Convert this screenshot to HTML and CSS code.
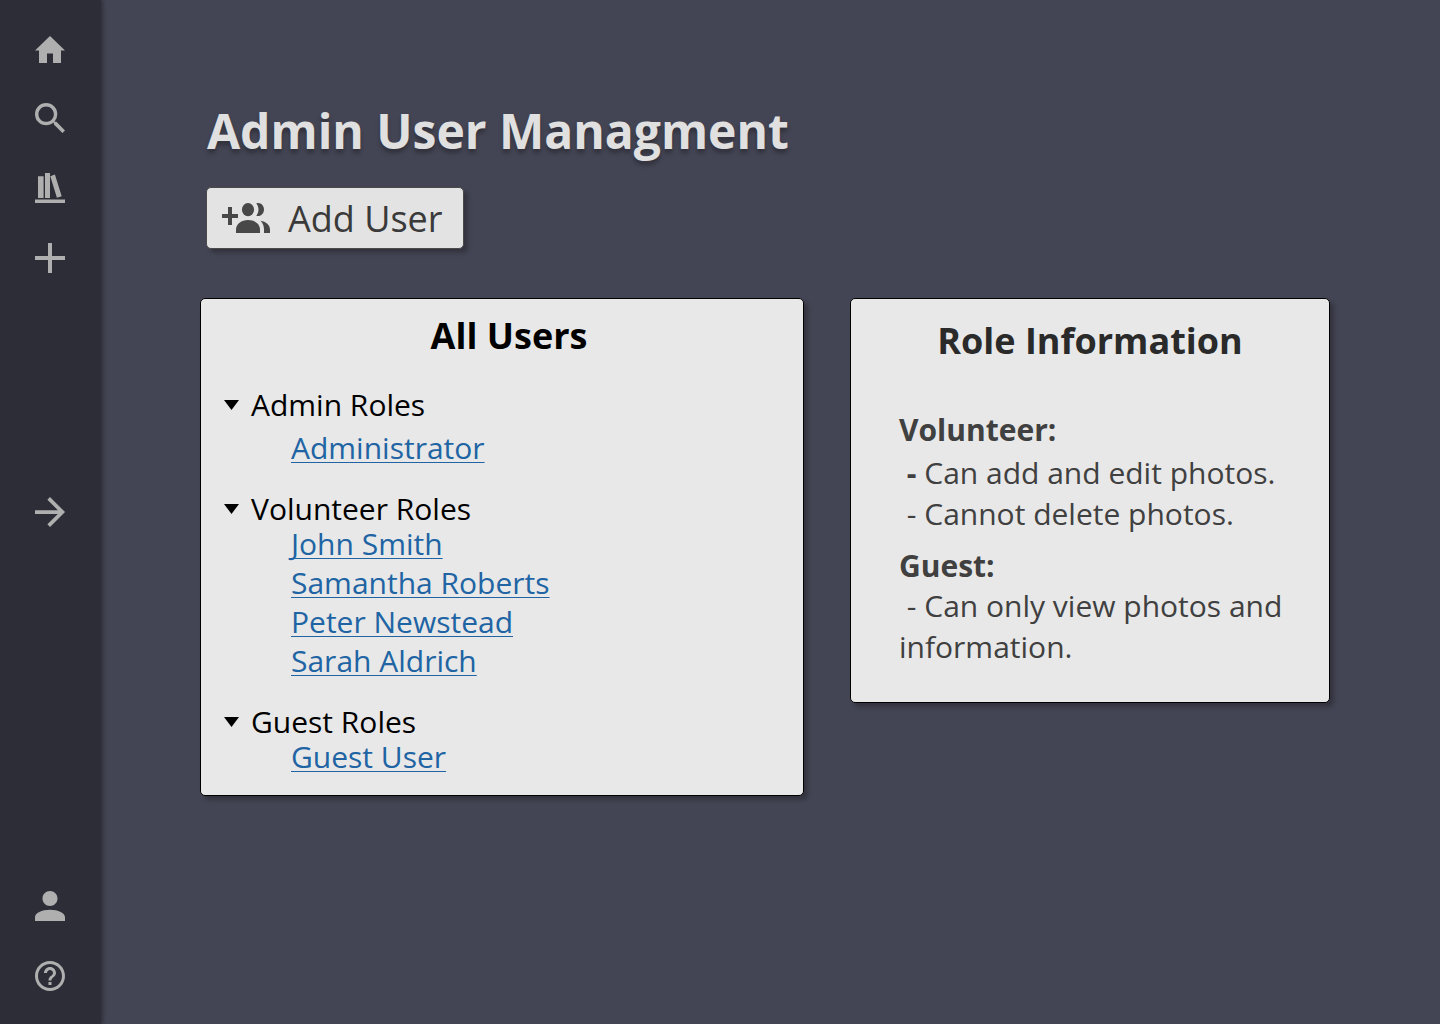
FILE: index.html
```html
<!DOCTYPE html>
<html lang="en">
<head>
<meta charset="utf-8">
<meta name="viewport" content="width=device-width, initial-scale=1">
<title>Admin User Managment</title>
<link rel="stylesheet" href="styles.css">
</head>
<body>
<div class="app">
  <nav class="sidebar" aria-label="Main">
    <div class="nav-group">
      <a class="nav-link" href="#home" aria-label="Home"><svg class="icon icon-home" viewBox="0 0 30 27"><path d="M15 0l15 14.4h-4V27h-8v-9.6h-6V27H4V14.4H0z"/></svg></a>
      <a class="nav-link" href="#search" aria-label="Search"><svg class="icon" viewBox="3 3 17.49 17.49"><path d="M15.5 14h-.79l-.28-.27A6.471 6.471 0 0 0 16 9.5 6.5 6.5 0 1 0 9.5 16c1.61 0 3.09-.59 4.23-1.57l.27.28v.79l5 4.99L20.49 19l-4.99-5zm-6 0C7.01 14 5 11.99 5 9.5S7.01 5 9.5 5 14 7.01 14 9.5 11.99 14 9.5 14z"/></svg></a>
      <a class="nav-link" href="#library" aria-label="Library"><svg class="icon" viewBox="0 0 30 30"><path d="M3 3.3h5.6V25H3zM10 0h5v25h-5zM15.3 3.2l4.6-1.6 6.8 21.6-4.8 1.6zM0 26.5h30V30H0z"/></svg></a>
      <a class="nav-link" href="#add" aria-label="Add"><svg class="icon" viewBox="0 0 30 30"><path d="M13 0h4v13h13v4H17v13h-4V17H0v-4h13z"/></svg></a>
    </div>
    <a class="nav-link" href="#expand" aria-label="Expand menu"><svg class="icon" viewBox="4 4 16 16"><path d="M12 4l-1.41 1.41L16.17 11H4v2h12.17l-5.58 5.59L12 20l8-8z"/></svg></a>
    <div class="nav-group nav-bottom">
      <a class="nav-link" href="#profile" aria-label="Profile"><svg class="icon" viewBox="4 4 16 16"><path d="M12 12c2.21 0 4-1.79 4-4s-1.79-4-4-4-4 1.79-4 4 1.79 4 4 4zm0 2c-4.42 0-8 1.79-8 4v2h16v-2c0-2.21-3.58-4-8-4z"/></svg></a>
      <a class="nav-link" href="#help" aria-label="Help"><svg class="icon" viewBox="2 2 20 20"><path d="M11 18h2v-2h-2v2zm1-16C6.48 2 2 6.48 2 12s4.48 10 10 10 10-4.48 10-10S17.52 2 12 2zm0 18c-4.41 0-8-3.59-8-8s3.59-8 8-8 8 3.59 8 8-3.59 8-8 8zm0-14c-2.21 0-4 1.79-4 4h2c0-1.1.9-2 2-2s2 .9 2 2c0 2-3 1.75-3 5h2c0-2.25 3-2.5 3-5 0-2.21-1.79-4-4-4z"/></svg></a>
    </div>
  </nav>

  <main class="content">
    <header class="page-header">
      <h1 class="page-title">Admin User Managment</h1>
      <button class="add-user" type="button">
        <svg class="icon-group-add" viewBox="0 0 48 30" aria-hidden="true"><path d="M6 4h4v7h6v4h-6v7H6v-7H0v-4h6z"/><ellipse cx="26" cy="6.6" rx="6.1" ry="6.6"/><path d="M34.3 0.3C38.7 -.8 42 2.5 42 6.6s-3.3 7.4-7.7 6.3C37.2 9.3 37.2 3.9 34.3.3z"/><path d="M14 30v-3.5C14 21 19.4 17 26 17s12 4 12 9.5V30z"/><path d="M38.5 17.7c5.4.8 9.5 4.2 9.5 8.8V30h-6v-3.5c0-3.7-1.3-6.7-3.5-8.8z"/></svg>
        Add User
      </button>
    </header>

    <div class="panels">
      <section class="card users">
        <h2 class="card-title users-title">All Users</h2>
        <details class="role role-spaced" open>
          <summary class="role-name"><svg class="caret" viewBox="0 0 15 10" aria-hidden="true"><path d="M0 0h15L7.5 10z"/></svg>Admin Roles</summary>
          <ul class="user-list">
            <li><a class="user-link" href="#administrator">Administrator</a></li>
          </ul>
        </details>
        <details class="role" open>
          <summary class="role-name"><svg class="caret" viewBox="0 0 15 10" aria-hidden="true"><path d="M0 0h15L7.5 10z"/></svg>Volunteer Roles</summary>
          <ul class="user-list">
            <li><a class="user-link" href="#john-smith">John Smith</a></li>
            <li><a class="user-link" href="#samantha-roberts">Samantha Roberts</a></li>
            <li><a class="user-link" href="#peter-newstead">Peter Newstead</a></li>
            <li><a class="user-link" href="#sarah-aldrich">Sarah Aldrich</a></li>
          </ul>
        </details>
        <details class="role" open>
          <summary class="role-name"><svg class="caret" viewBox="0 0 15 10" aria-hidden="true"><path d="M0 0h15L7.5 10z"/></svg>Guest Roles</summary>
          <ul class="user-list">
            <li><a class="user-link" href="#guest-user">Guest User</a></li>
          </ul>
        </details>
      </section>

      <section class="card info">
        <h2 class="card-title info-title">Role Information</h2>
        <h3 class="info-role">Volunteer:</h3>
        <p class="info-line">&nbsp;<b>-</b> Can add and edit photos.</p>
        <p class="info-line">&nbsp;- Cannot delete photos.</p>
        <h3 class="info-role info-role-next">Guest:</h3>
        <p class="info-line">&nbsp;- Can only view photos and information.</p>
      </section>
    </div>
  </main>
</div>
</body>
</html>
```
FILE: styles.css
```css
* {
  box-sizing: border-box;
}

body {
  margin: 0;
  background: #444554;
  color: #000;
  font-family: "Open Sans", "Noto Sans", sans-serif;
  font-size: 30px;
}

h1, h2, h3, p, ul {
  margin: 0;
  padding: 0;
}

.app {
  display: grid;
  grid-template-columns: 101px 1fr;
  min-height: 100vh;
}

.sidebar {
  display: grid;
  grid-template-rows: 1fr auto 1fr;
  justify-items: center;
  padding: 33px 1px 33px 0;
  background: #2d2d37;
  box-shadow: 2px 0 4px rgba(46, 42, 52, 0.9);
}

.nav-group {
  display: flex;
  flex-direction: column;
  gap: 40px;
}

.nav-bottom {
  justify-content: flex-end;
}

.nav-link {
  display: flex;
  align-items: flex-end;
  width: 30px;
  height: 30px;
}

.icon {
  width: 30px;
  height: 30px;
  fill: #afafaf;
}

.icon-home {
  height: 27px;
}

.content {
  padding: 98px 110px 48px 99px;
}

.page-header {
  padding-left: 6px;
}

.page-title {
  padding-left: 1px;
  color: #e0e0e0;
  font-size: 48px;
  line-height: 66px;
  text-shadow: 0 4px 4px rgba(0, 0, 0, 0.3);
}

.add-user {
  display: flex;
  align-items: center;
  gap: 18px;
  height: 62px;
  margin: 23px 0 49px;
  padding: 0 20px 0 15px;
  border: 1px solid #4a4a4a;
  border-radius: 5px;
  background: #e3e3e3;
  box-shadow: 4px 4px 4px rgba(0, 0, 0, 0.25);
  color: #3a3a3a;
  font: inherit;
  font-size: 36px;
}

.icon-group-add {
  width: 48px;
  height: 30px;
  fill: #484848;
}

.panels {
  display: grid;
  grid-template-columns: 604fr 480fr;
  gap: 46px;
  align-items: start;
}

.card {
  border: 1px solid #000;
  border-radius: 5px;
  background: #e8e8e8;
  box-shadow: 4px 4px 4px rgba(0, 0, 0, 0.25);
}

.card-title {
  font-size: 36px;
  line-height: 48px;
  text-align: center;
}

.users {
  padding: 13px 23px 19px 23px;
}

.users-title {
  padding-left: 14px;
  margin-bottom: 30px;
}

.role + .role {
  margin-top: 27px;
}

.role-name {
  display: flex;
  align-items: center;
  gap: 12px;
  line-height: 30px;
  list-style: none;
}

.caret {
  width: 15px;
  height: 10px;
}

.role-spaced .user-list {
  padding-top: 8px;
}

.user-list {
  padding-left: 67px;
  line-height: 39px;
  list-style: none;
}

.user-link {
  color: #2064a4;
  text-decoration-thickness: 1px;
  text-underline-offset: 3px;
  text-decoration-skip-ink: none;
}

.info {
  padding: 18px 40px 35px 48px;
  color: #404040;
}

.info-title {
  margin: 0 8px 45px 0;
  color: #2a2a2a;
}

.info-role {
  margin-bottom: 2px;
  font-size: 30px;
  line-height: 40px;
}

.info-role-next {
  margin: 12px 0 -1px;
}

.info-line {
  line-height: 41px;
}
```
